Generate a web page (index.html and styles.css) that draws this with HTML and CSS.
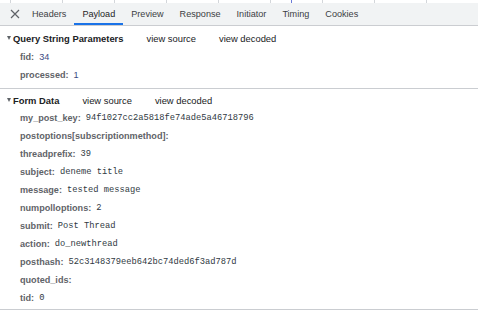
FILE: index.html
```html
<!DOCTYPE html>
<html>
<head>
<meta charset="utf-8">
<link rel="stylesheet" href="styles.css">
</head>
<body>
<div class="strip">
  <span class="cell first"></span><span class="cell"></span><span class="cell"></span><span class="cell"></span><span class="cell"></span><span class="cell"></span><span class="cell"></span><span class="cell"></span><span class="cell"></span>
  <span class="marker"></span>
</div>
<div class="tabs">
  <span class="close"><svg width="10" height="10" viewBox="0 0 10 10"><path d="M1 1L9 9M9 1L1 9" stroke="#5f6368" stroke-width="1.2" fill="none"/></svg></span>
  <span class="tab">Headers</span>
  <span class="tab active">Payload</span>
  <span class="tab">Preview</span>
  <span class="tab">Response</span>
  <span class="tab">Initiator</span>
  <span class="tab">Timing</span>
  <span class="tab">Cookies</span>
</div>
<div class="section s1">
  <div class="head"><span class="tri"></span><span class="title">Query String Parameters</span><span class="link">view source</span><span class="link">view decoded</span></div>
  <div class="row"><span class="key">fid:</span><span class="val">34</span></div>
  <div class="row"><span class="key">processed:</span><span class="val">1</span></div>
</div>
<div class="section s2">
  <div class="head"><span class="tri"></span><span class="title">Form Data</span><span class="link">view source</span><span class="link">view decoded</span></div>
  <div class="row"><span class="key">my_post_key:</span><span class="mono">94f1027cc2a5818fe74ade5a46718796</span></div>
  <div class="row"><span class="key">postoptions[subscriptionmethod]:</span></div>
  <div class="row"><span class="key">threadprefix:</span><span class="mono">39</span></div>
  <div class="row"><span class="key">subject:</span><span class="mono">deneme title</span></div>
  <div class="row"><span class="key">message:</span><span class="mono">tested message</span></div>
  <div class="row"><span class="key">numpolloptions:</span><span class="mono">2</span></div>
  <div class="row"><span class="key">submit:</span><span class="mono">Post Thread</span></div>
  <div class="row"><span class="key">action:</span><span class="mono">do_newthread</span></div>
  <div class="row"><span class="key">posthash:</span><span class="mono">52c3148379eeb642bc74ded6f3ad787d</span></div>
  <div class="row"><span class="key">quoted_ids:</span></div>
  <div class="row"><span class="key">tid:</span><span class="mono">0</span></div>
</div>
</body>
</html>
```
FILE: styles.css
```css
html, body {
  margin: 0;
  padding: 0;
  background: #fff;
  font-family: "Liberation Sans", Arial, sans-serif;
  width: 478px;
  height: 334px;
  overflow: hidden;
}
.strip {
  position: relative;
  display: flex;
  height: 3px;
  background: #fff;
}
.cell {
  width: 52px;
  height: 3px;
  border-right: 1px solid #d3d6da;
  box-sizing: border-box;
  flex: none;
}
.cell.first { width: 11px; }
.marker {
  position: absolute;
  left: 291px;
  top: 0;
  width: 1px;
  height: 3px;
  background: #6a7bd8;
}
.tabs {
  display: flex;
  align-items: stretch;
  height: 22px;
  background: #f1f3f4;
  border-bottom: 1px solid #cbcdd1;
}
.close {
  display: flex;
  align-items: center;
  padding-left: 10px;
  width: 32px;
  box-sizing: border-box;
  flex: none;
}
.close svg { display: block; }
.tab {
  display: flex;
  align-items: center;
  font-size: 9.1px;
  color: #3c4043;
  padding: 0 8px 0 0;
  margin-right: 8px;
  box-sizing: border-box;
}
.tab.active {
  color: #1f1f1f;
  border-bottom: 2px solid #1a73e8;
  padding: 2px 8px 0 8px;
  margin-left: -8px;
  margin-right: 8px;
}
.section {
  border-bottom: 1px solid #cacdd1;
}
.s1 { padding: 3px 0 4px; }
.s1 .head { height: 19px; }
.s2 { padding: 2px 0 2px; }
.head {
  display: flex;
  align-items: center;
  height: 18px;
  padding-left: 7px;
  font-size: 9.4px;
  color: #202124;
}
.tri {
  width: 0;
  height: 0;
  border-left: 2.5px solid transparent;
  border-right: 2.5px solid transparent;
  border-top: 4px solid #5f6368;
  margin-right: 2px;
  margin-top: -1px;
}
.title { font-weight: bold; }
.link {
  margin-left: 23px;
  color: #202124;
}
.row {
  display: flex;
  align-items: center;
  height: 18px;
  padding-left: 20px;
  font-size: 9.1px;
}
.key {
  font-weight: bold;
  color: #5f6368;
  margin-right: 5px;
}
.val { color: #3b4a82; }
.mono {
  font-family: "Liberation Mono", "DejaVu Sans Mono", monospace;
  font-size: 8.75px;
  color: #303942;
}
```
